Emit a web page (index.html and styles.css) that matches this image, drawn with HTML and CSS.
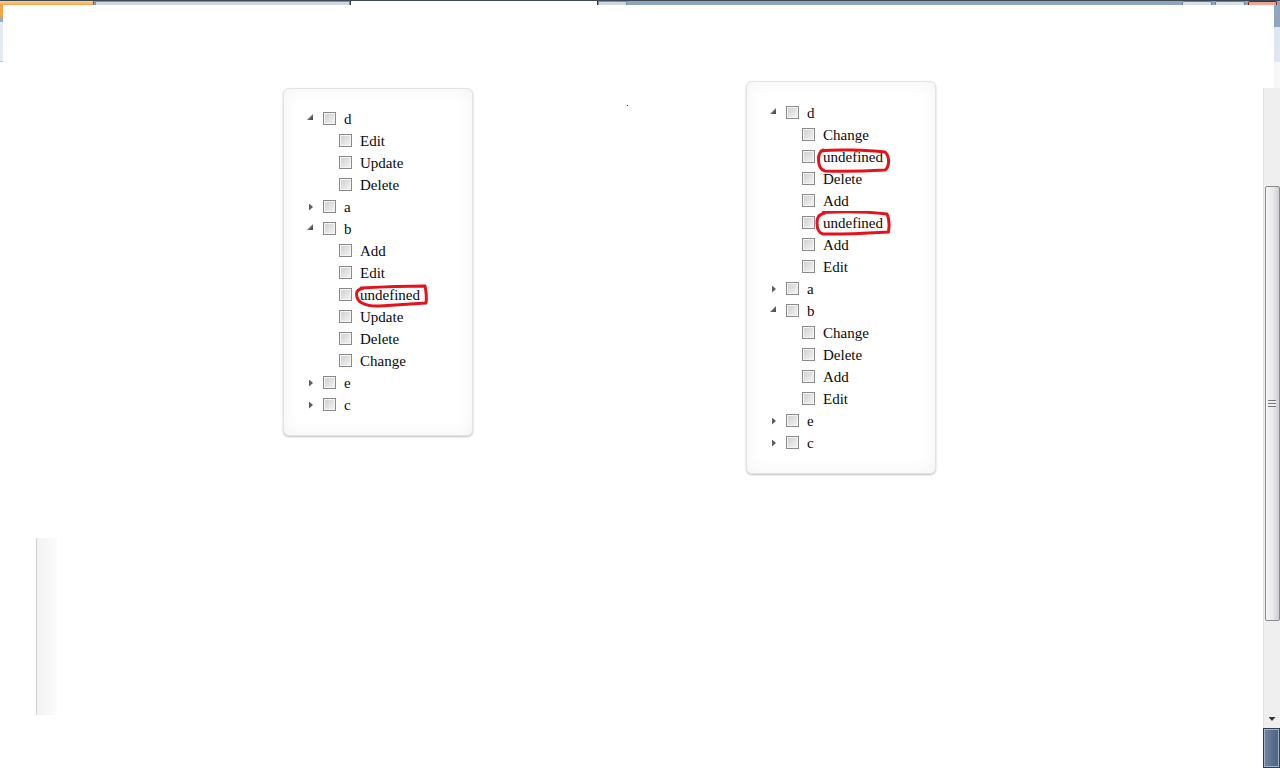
FILE: index.html
```html
<!DOCTYPE html>
<html lang="en">
<head>
    <meta charset="UTF-8">
    <meta name="viewport" content="width=device-width, initial-scale=1.0">
    <title>Permission Tree</title>
    <link rel="stylesheet" href="styles.css">
</head>
<body>

    <div class="chrome">
        <div class="tab tab-start"></div>
        <div class="tab tab-plain tab-wide"></div>
        <div class="tab tab-active"></div>
        <div class="tab tab-plain tab-small"></div>
        <div class="chrome-fill"></div>
        <div class="win-btn"></div>
        <div class="win-btn"></div>
        <div class="win-btn win-close"></div>
        <div class="chrome-end"></div>
    </div>

    <div class="frame">
        <div class="edge-left"><div class="edge-left-top"></div></div>

        <main class="page">
            <div class="trees">
                <div class="tree tree-first">
                    <div class="node-row"><span class="toggle open"></span><input type="checkbox" class="check"><span class="label">d</span></div>
                    <div class="children">
                        <div class="node-row"><input type="checkbox" class="check"><span class="label">Edit</span></div>
                        <div class="node-row"><input type="checkbox" class="check"><span class="label">Update</span></div>
                        <div class="node-row"><input type="checkbox" class="check"><span class="label">Delete</span></div>
                    </div>
                    <div class="node-row"><span class="toggle closed"></span><input type="checkbox" class="check"><span class="label">a</span></div>
                    <div class="node-row"><span class="toggle open"></span><input type="checkbox" class="check"><span class="label">b</span></div>
                    <div class="children">
                        <div class="node-row"><input type="checkbox" class="check"><span class="label">Add</span></div>
                        <div class="node-row"><input type="checkbox" class="check"><span class="label">Edit</span></div>
                        <div class="node-row"><input type="checkbox" class="check"><span class="label">undefined
                            <svg class="mark" viewBox="0 0 78 28"><path d="M7,4 C26,3 50,2 71,2 C72,7 73,13 72,19 C56,20 40,21 26,22 C18,22.5 12,21 8,19 C4,17 2.5,14 2.5,10 C2.5,7 4,5 9,4.5"/></svg>
                        </span></div>
                        <div class="node-row"><input type="checkbox" class="check"><span class="label">Update</span></div>
                        <div class="node-row"><input type="checkbox" class="check"><span class="label">Delete</span></div>
                        <div class="node-row"><input type="checkbox" class="check"><span class="label">Change</span></div>
                    </div>
                    <div class="node-row"><span class="toggle closed"></span><input type="checkbox" class="check"><span class="label">e</span></div>
                    <div class="node-row"><span class="toggle closed"></span><input type="checkbox" class="check"><span class="label">c</span></div>
                </div>

                <div class="spacer"><span class="dot"></span></div>

                <div class="tree tree-second">
                    <div class="node-row"><span class="toggle open"></span><input type="checkbox" class="check"><span class="label">d</span></div>
                    <div class="children">
                        <div class="node-row"><input type="checkbox" class="check"><span class="label">Change</span></div>
                        <div class="node-row"><input type="checkbox" class="check"><span class="label">undefined
                            <svg class="mark" viewBox="0 0 78 28"><path d="M4,5 C20,3 50,4 68,6 C71,9 72,13 71.5,17 C71,21 70,23 68,24 C50,25 25,25.5 8,25 C3,24 1.5,19 1.5,13 C1.5,9 2.5,6 6,4"/></svg>
                        </span></div>
                        <div class="node-row"><input type="checkbox" class="check"><span class="label">Delete</span></div>
                        <div class="node-row"><input type="checkbox" class="check"><span class="label">Add</span></div>
                        <div class="node-row"><input type="checkbox" class="check"><span class="label">undefined
                            <svg class="mark mark-low" viewBox="0 0 78 28"><path d="M8,1.5 C28,0.5 55,1 72,3 C74,7 74.5,14 73.5,21 C55,22 30,23.5 8,23 C4,22 2,18 2,12 C2,7 3,3.5 10,2"/></svg>
                        </span></div>
                        <div class="node-row"><input type="checkbox" class="check"><span class="label">Add</span></div>
                        <div class="node-row"><input type="checkbox" class="check"><span class="label">Edit</span></div>
                    </div>
                    <div class="node-row"><span class="toggle closed"></span><input type="checkbox" class="check"><span class="label">a</span></div>
                    <div class="node-row"><span class="toggle open"></span><input type="checkbox" class="check"><span class="label">b</span></div>
                    <div class="children">
                        <div class="node-row"><input type="checkbox" class="check"><span class="label">Change</span></div>
                        <div class="node-row"><input type="checkbox" class="check"><span class="label">Delete</span></div>
                        <div class="node-row"><input type="checkbox" class="check"><span class="label">Add</span></div>
                        <div class="node-row"><input type="checkbox" class="check"><span class="label">Edit</span></div>
                    </div>
                    <div class="node-row"><span class="toggle closed"></span><input type="checkbox" class="check"><span class="label">e</span></div>
                    <div class="node-row"><span class="toggle closed"></span><input type="checkbox" class="check"><span class="label">c</span></div>
                </div>
            </div>

            <div class="ghost"></div>
        </main>

        <div class="side">
            <div class="side-top"><div class="side-white"></div><div class="edge-right"></div></div>
            <div class="scrollbar">
                <div class="thumb"><span class="grip"></span></div>
                <span class="arrow-down"></span>
            </div>
            <div class="side-bottom"></div>
        </div>
    </div>

</body>
</html>
```

FILE: styles.css
```css
* {
    box-sizing: border-box;
}
body {
    font-family: "Liberation Serif", "Times New Roman", serif;
    font-size: 15px;
    color: #0a0a0a;
    background-color: #fff;
    margin: 0;
    height: 768px;
    overflow: hidden;
}

/* window chrome strip */
.chrome {
    display: flex;
    height: 5px;
    background: #8ea5be;
    border-top: 1px solid #3f4752;
}
.tab {
    height: 100%;
}
.tab-start {
    width: 94px;
    background: linear-gradient(#fbd29c, #f4a540);
    border-right: 1px solid #8a5a20;
}
.tab-plain {
    background: #ccd8e5;
    border: 1px solid #7d8ea3;
    border-bottom: none;
}
.tab-wide {
    width: 255px;
    margin-left: 1px;
}
.tab-active {
    width: 248px;
    background: #fff;
    border-left: 1px solid #333;
    border-right: 1px solid #333;
}
.tab-small {
    width: 29px;
}
.chrome-fill {
    flex: 1;
}
.win-btn {
    width: 30px;
    margin-right: 3px;
    background: #d7e1ec;
    border: 1px solid #6d7f95;
    border-bottom: none;
    border-radius: 2px 2px 0 0;
}
.win-close {
    width: 29px;
    margin-right: 0;
    background: #eba594;
    border-color: #6e2424;
}
.chrome-end {
    width: 3px;
}

.frame {
    display: flex;
    height: 763px;
}
.edge-left {
    width: 3px;
}
.edge-left-top {
    height: 57px;
    background: linear-gradient(#f2a644 0 12px, #98abc1 12px 17px, #e3ebf5 17px);
    border-bottom: 1px solid #b8c4d2;
}
.page {
    flex: 1;
}

/* trees */
.trees {
    display: flex;
    align-items: flex-start;
    margin: 76px 0 0 280px;
}
.tree {
    width: 190px;
    background: #fff;
    border: 1px solid #e3e3e3;
    border-radius: 6px;
    box-shadow: inset 0 0 18px rgba(0, 0, 0, 0.05), 0 1px 2px rgba(0, 0, 0, 0.25);
    padding: 18px 0 20px 23px;
}
.tree-first {
    margin-top: 7px;
}
.tree-second {
    padding-top: 19px;
}
.spacer {
    width: 273px;
}
.dot {
    display: block;
    width: 1px;
    height: 1px;
    background: #333;
    margin: 24px 0 0 154px;
}
.node-row {
    display: flex;
    align-items: center;
    height: 22px;
}
.children {
    padding-left: 32px;
}
.toggle {
    flex: none;
    margin-right: 10px;
}
.toggle.open {
    width: 6px;
    height: 6px;
    margin-bottom: 2px;
    background: linear-gradient(135deg, #a0a0a0, #3f3f3f);
    clip-path: polygon(100% 0, 100% 100%, 0 100%);
}
.toggle.closed {
    width: 4px;
    height: 7px;
    margin-left: 2px;
    margin-top: 2px;
    background: #5f5f5f;
    clip-path: polygon(0 0, 100% 50%, 0 100%);
}
.check {
    -webkit-appearance: none;
    appearance: none;
    flex: none;
    width: 13px;
    height: 13px;
    margin: 0 8px 0 0;
    border: 1px solid #8a8a8a;
    border-radius: 0;
    background: linear-gradient(135deg, #cdcdcd, #f5f5f5);
    box-shadow: inset 0 0 0 1px #f4f4f4;
}
.label {
    position: relative;
    top: 1px;
    line-height: 22px;
    white-space: nowrap;
}
.mark {
    position: absolute;
    left: -6px;
    top: 0;
    width: 78px;
    height: 28px;
    pointer-events: none;
}
.mark-low {
    left: -8px;
    top: -1px;
}
.mark path {
    fill: none;
    stroke: #e5121b;
    stroke-width: 3;
    stroke-linecap: round;
    stroke-linejoin: round;
}

.ghost {
    width: 21px;
    height: 177px;
    margin: 64px 0 0 33px;
    border-left: 1px solid #d2d2d2;
    background: linear-gradient(90deg, #f2f2f2, #fbfbfb);
}

/* right edge and scrollbar */
.side {
    width: 17px;
    display: flex;
    flex-direction: column;
}
.side-top {
    height: 83px;
    display: flex;
}
.side-white {
    width: 11px;
    background: #fff;
}
.edge-right {
    flex: 1;
    background: linear-gradient(#8ea5be 0 22px, #dde7f2 22px 57px, #f7f7f7 57px);
}
.scrollbar {
    height: 640px;
    background: #efefef;
    border-left: 1px solid #e0e0e0;
    display: flex;
    flex-direction: column;
    align-items: center;
}
.thumb {
    width: 15px;
    height: 435px;
    margin-top: 98px;
    border: 1px solid #8a8a8a;
    border-radius: 2px;
    background: linear-gradient(90deg, #f5f5f5, #e8e8e8 55%, #cdcdd4);
    display: flex;
    align-items: center;
    justify-content: center;
}
.grip {
    width: 8px;
    height: 7px;
    background: repeating-linear-gradient(#777 0 1px, #eee 1px 3px);
}
.arrow-down {
    margin-top: auto;
    margin-bottom: 7px;
    width: 7px;
    height: 4px;
    background: #333;
    clip-path: polygon(0 0, 100% 0, 50% 100%);
}
.side-bottom {
    flex: 1;
    background: linear-gradient(90deg, #7086a5, #4c5f7c);
    border: 1px solid #2f3c52;
    box-shadow: inset 0 0 0 1px #a2b3ca;
}
```
